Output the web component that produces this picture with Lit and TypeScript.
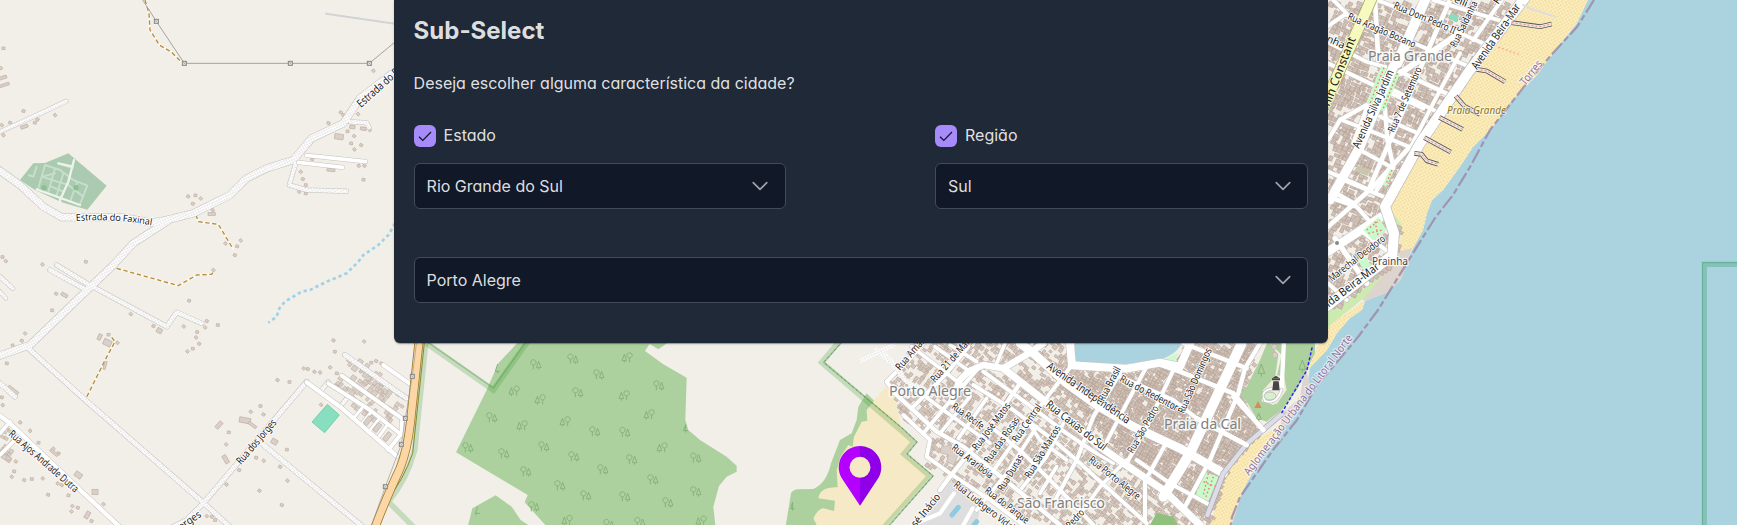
import { LitElement, html, svg, css } from "lit";
import { customElement, property } from "lit/decorators.js";

type Pt = [number, number];
const pts = (s: string): Pt[] => s.trim().split(/\s+/).map((p) => p.split(",").map(Number) as Pt);

function inside(x: number, y: number, poly: Pt[]): boolean {
  let hit = false;
  for (let i = 0, j = poly.length - 1; i < poly.length; j = i++) {
    const [xi, yi] = poly[i], [xj, yj] = poly[j];
    if (yi > y !== yj > y && x < ((xj - xi) * (y - yi)) / (yj - yi) + xi) hit = !hit;
  }
  return hit;
}

// Fills a district outline with small footprints aligned to its street grid.
function footprints(outline: string, deg: number, cell: number, density: number, seed: number): string {
  const poly = pts(outline);
  let s = seed;
  const rnd = () => ((s = (s * 16807) % 2147483647) / 2147483647);
  const c = Math.cos((deg * Math.PI) / 180), n = Math.sin((deg * Math.PI) / 180);
  const cx = poly.reduce((a, p) => a + p[0], 0) / poly.length;
  const cy = poly.reduce((a, p) => a + p[1], 0) / poly.length;
  let d = "";
  for (let u = -800; u < 800; u += cell)
    for (let v = -800; v < 800; v += cell) {
      const uu = u + (rnd() - 0.5) * cell * 0.4, vv = v + (rnd() - 0.5) * cell * 0.4;
      const x = cx + uu * c - vv * n, y = cy + uu * n + vv * c;
      const w = cell * (0.6 + rnd() * 0.65), h = cell * (0.55 + rnd() * 0.6);
      if (rnd() > density || !inside(x, y, poly)) continue;
      d += `M${x.toFixed(1)} ${y.toFixed(1)}l${(w * c).toFixed(1)} ${(w * n).toFixed(1)}l${(-h * n).toFixed(1)} ${(h * c).toFixed(1)}l${(-w * c).toFixed(1)} ${(-w * n).toFixed(1)}z`;
    }
  return d;
}

const SOUTH = "100,30 520,30 575,40 575,110 740,125 840,100 905,110 905,30 1100,30 1150,40 1100,150 1085,200 1140,300 1040,420 990,585 560,585 440,560 330,500 210,450 130,390 150,330 60,260 20,160";
const SOUTH_DENSE = "470,60 575,130 740,125 850,110 920,60 1130,40 1080,190 1140,300 1050,410 980,580 800,440 700,340 560,190";
const NORTH = "54,0 640,0 480,210 330,420 240,600 230,620 270,690 260,780 60,930 54,900";

const southRoads: [number, string][] = [
  [11, "95,50 200,130 245,165"], [11, "165,50 270,125"], [11, "210,45 290,95"], [11, "90,165 190,240 330,340"],
  [13, "45,190 170,305 250,350 400,470 540,585"], [12, "70,255 150,330 140,380 210,430 330,510 430,585"],
  [12, "280,165 400,240 520,330 600,400 700,490 800,580"], [12, "310,125 440,220 560,310 650,370"],
  [12, "345,300 430,370 540,480 640,585"], [11, "440,270 480,330 560,390"], [12, "20,155 95,80 130,40"],
  [12, "100,230 200,130 265,50"], [12, "130,310 230,190 290,120"], [11, "180,310 270,200"], [11, "235,325 320,205"],
  [13, "180,480 210,440 330,290 420,160"], [12, "345,415 420,310 510,190 580,100"], [11, "290,540 380,430 470,290"],
  [11, "425,475 500,380 550,280"], [12, "520,520 590,390 640,260 720,130"], [11, "480,490 530,410"],
  [11, "610,540 660,470 740,390"], [12, "680,335 740,220 800,110"], [12, "740,400 800,290 885,110"],
  [12, "795,570 795,450"], [12, "800,445 855,345"], [12, "20,155 45,190"], [11, "350,100 375,40"],
  [13, "910,40 1100,115"], [14, "830,100 900,125 1060,190 1150,300"], [13, "950,265 1100,345"],
  [13, "1140,40 1095,115 1075,190 990,390 915,530"], [12, "770,390 870,460 990,525"],
  [12, "720,140 880,210 950,265"], [11, "1215,40 1205,190"], [10, "600,340 700,400"],
  [20, "490,40 455,65 370,115 310,105 265,125 240,150 215,215"], [26, "420,40 455,65"],
  [24, "570,40 576,106 740,116 840,98 900,110 935,30"],
  [22, "370,115 490,210 660,350 760,420 850,480 960,585"],
  [26, "455,65 560,160 650,225 760,290 900,355 1030,430"],
  [30, "850,500 930,370 1010,200 1085,40"],
];

const northRoads: [number, string][] = [
  [12, "70,0 110,40 54,78"], [14, "195,0 205,180"], [12, "110,45 360,150 490,205"], [12, "200,0 360,60 520,130"],
  [12, "370,0 580,65"], [12, "60,130 170,185 220,200"], [12, "54,190 200,260 340,325"], [13, "270,215 430,290"],
  [12, "250,270 400,345"], [13, "54,420 90,360 170,315 225,325 232,420 250,500 200,570"], [12, "210,350 335,405"],
  [12, "95,360 200,400 320,450"], [12, "54,515 180,570"], [12, "150,450 250,505"], [14, "420,0 350,160 280,330 180,560"],
  [12, "450,160 380,290 300,445"], [12, "575,0 490,120"], [18, "270,220 330,180 440,105"], [13, "225,200 180,300 130,430"],
  [13, "54,590 140,620 210,700"], [14, "300,440 190,560 54,680"], [14, "70,575 130,610"],
  [26, "54,755 215,650"], [16, "75,715 170,850"], [12, "54,850 110,900"], [12, "150,690 240,760"], [12, "100,540 220,590"],
  [30, "345,0 262,190"], [28, "250,200 150,440 60,600"],
];

const dirtRoads: [number, string][] = [
  [21, "-10,505 60,555 130,620 185,652 370,652 455,668 500,660 580,640 690,585 740,535 800,505 880,480 935,415 1030,370 1080,295 1190,210"],
  [21, "500,665 400,730 340,795 90,1035 -10,1070"], [12, "0,395 100,350 198,304"],
  [12, "1050,365 1100,368 1107,382"], [12, "890,480 868,555 920,570 1040,574"], [13, "150,810 250,865"],
  [13, "170,795 260,850 500,980 530,937 605,970"], [14, "85,1045 250,1195 610,1508 700,1590"],
  [14, "920,1145 780,1310 610,1510 560,1560 480,1600"], [14, "785,1330 1100,1590"],
  [14, "1035,1065 1220,1195"], [12, "965,1170 985,1145"], [12, "1020,1220 1045,1190"], [14, "0,1150 45,1190"], [12, "0,830 38,865"], [10, "0,875 18,895"],
];
const pavedLeft: [number, string][] = [
  [11, "920,466 1097,485"], [11, "895,487 1028,502"], [13, "-10,1240 30,1270 230,1460 380,1600"], [11, "30,1265 0,1300"], [11, "40,1325 0,1365"],
  [13, "920,1147 1020,1220 1190,1368"], [12, "985,1150 1110,1230 1205,1305"], [12, "1025,1127 1215,1262"], [12, "1150,1095 1230,1152"],
  [12, "1205,1265 1205,1300 1165,1350"], [9, "1085,1225 1065,1250"], [9, "1110,1240 1088,1268"], [9, "1135,1260 1112,1288"], [9, "1160,1278 1138,1308"],
];

const houses = "10,145 2,204 70,333 165,345 112,358 104,368 5,375 30,368 10,405 1022,337 1030,345 1074,342 985,369 1042,394 1062,408 1053,430 1063,448 1083,435 1090,386 1109,390 936,477 1076,497 1093,497 1090,539 902,515 908,537 917,555 897,575 917,580 1120,212 564,589 586,586 602,595 578,611 638,630 676,730 711,739 722,721 704,765 7,771 17,783 257,785 127,793 168,881 156,931 75,1000 65,1022 38,1036 392,942 460,978 551,979 620,963 653,975 615,982 591,996 588,1012 597,1031 578,1046 562,1054 567,902 325,1004 352,1028 20,1090 640,810 832,1140 868,1146 911,1105 923,1107 960,1117 990,1102 1004,1055 1092,1024 1000,1021 1010,1120 943,1115 781,1218 752,1235 790,1243 686,1297 678,1333 717,1410 679,1453 778,1472 768,1373 791,1382 840,1400 860,1349 862,1442 845,1515 963,1214 60,1267 115,1328 160,1346 175,1360 90,1292 47,1384 42,1414 35,1430 72,1440 95,1437 128,1435 144,1484 173,1450 185,1455 205,1486 217,1518 233,1523 260,1485 310,1512 274,1563 214,1534 1128,1083 1113,1088 1143,1090 5,1192 8,1215 20,1345 15,1360 620,1548 635,1550 645,1560";
const bigHouses = "8,233,24,9,-18 12,255,32,8,-18 73,380,22,9,-20 1017,410,26,16,8 1057,381,16,10,8 1090,386,18,9,8 993,510,24,8,5 635,642,22,8,0 193,885,20,10,30 299,1011,10,18,25 322,1028,24,18,25 315,1096,7,24,15 478,992,16,14,30 657,1275,12,24,42 735,1261,34,16,10 757,1275,28,8,35 823,1325,18,15,30 677,1378,12,26,-30 235,1425,22,16,35 285,1476,18,16,0 162,1358,28,8,40 262,1545,12,22,30 38,1172,36,14,38 20,1375,28,14,35";

const trees = "318,104 429,87 507,134 444,188 186,263 495,305 585,307 114,353 222,371 342,350 432,380 519,419 288,425 390,467 468,497 585,500 606,389 669,449 714,518 798,384 798,485 312,530 687,167 630,577 537,583 591,83 252,183 330,209 582,197 657,254 276,287 405,275 696,353 411,571 813,573";

type Lab = [string, number, number, number, number, number?];
const streetLabels: Lab[] = [
  ["Estrada do Faxinal", 361, 108, 418, 57, 11], ["Rua Ajos Andrade Dutra", 8, 435, 75, 493, 10.5],
  ["Rua dos Jorges", 241, 465, 277, 423, 10.5], ["Jorges", 179, 532, 202, 516, 10.5], ["Rua Amazonas", 900, 371, 938, 327],
  ["Rua 21 de Maio", 935, 383, 973, 340], ["Rua Recife", 951, 408, 981, 430], ["Rua José Matos", 977, 451, 1011, 406],
  ["Rua das Rosas", 989, 464, 1020, 420], ["Rua Central", 1017, 443, 1042, 407], ["Rua São Marcos", 1030, 479, 1061, 428],
  ["Rua Araribóia", 951, 449, 990, 479], ["Rua Dunas", 1003, 492, 1024, 457], ["Rua Ludegero Vidal", 953, 486, 1011, 531],
  ["Rua do Parque", 984, 492, 1026, 524], ["Rua José Inácio", 898, 549, 941, 497], ["Rua São Pedro", 1049, 552, 1085, 513],
  ["Avenida Independência", 1046, 368, 1127, 424, 11.5], ["Rua Caxias do Sul", 1045, 406, 1103, 451, 11.5],
  ["Rua Porto Alegre", 1088, 461, 1137, 500], ["Rua Brasil", 1104, 402, 1121, 369], ["Rua do Redentor", 1119, 381, 1176, 411],
  ["Rua São Pedro", 1133, 454, 1159, 408], ["Rua São Domingos", 1184, 414, 1212, 350],
  ["Avenida Silva Jardim", 1359, 149, 1394, 72, 11], ["Rua 7 de Setembro", 1394, 133, 1422, 69], ["Rua Aragão Bozano", 1347, 19, 1414, 48],
  ["Rua Dom Pedro II", 1393, 8, 1454, 34], ["Rua Saldanha", 1456, 48, 1478, 3], ["Avenida Beira-Mar", 1477, 70, 1521, 7, 11.5],
  ["Benjamin Constant", 1316, 141, 1356, 39, 12], ["Saldanha", 1302, 30, 1343, 49], ["Borelli", 1438, -5, 1466, 7], ["Rua", 1498, 5, 1510, -12],
  ["Marechal Deodoro", 1332, 282, 1386, 240], ["Avenida Beira-Mar", 1310, 322, 1380, 268, 11.5],
];

const line = (w: number, d: string, cls: string) => svg`<polyline class=${cls} points=${d} stroke-width=${w}></polyline>`;
const roads = (list: [number, string][], cls: string) =>
  svg`${list.map(([w, d]) => line(w + 3, d, "casing"))}${list.map(([w, d]) => line(w, d, cls))}`;
const streetLabel = ([t, x1, y1, x2, y2, size = 10.2]: Lab, cls = "street") => {
  const len = Math.hypot(x2 - x1, y2 - y1), a = (Math.atan2(y2 - y1, x2 - x1) * 180) / Math.PI;
  return svg`<text class=${cls} font-size=${size} textLength=${len.toFixed(1)} lengthAdjust="spacingAndGlyphs"
    transform=${`translate(${x1} ${y1}) rotate(${a.toFixed(1)})`}>${t}</text>`;
};
const place = (t: string, x: number, y: number, w: number) =>
  svg`<text class="place" x=${x} y=${y} textLength=${w}>${t}</text>`;
const node = (x: number, y: number) => svg`<g transform=${`translate(${x} ${y})`}><rect class="node" x="-6" y="-6" width="12" height="12"></rect><path class="nodex" d="M-4-4L4 4M4-4L-4 4"></path></g>`;

@customElement("city-map")
class CityMap extends LitElement {
  static styles = css`
    :host { display: block; overflow: hidden; background: #f2efe9; }
    svg { display: block; }
    polyline, .line { fill: none; stroke-linejoin: round; stroke-linecap: round; }
    .casing { stroke: #c4c1bf; }
    .road { stroke: #fff; }
    .dirt { stroke: url(#dirt); }
    .bld { fill: #d9d0c9; stroke: #c3b2a6; stroke-width: 2.2; }
    .bld.town { fill: #d3c6bd; stroke: #bfada1; stroke-width: 2.6; }
    .bld.dense { fill: #cfc1b7; stroke: #b9a598; }
    .sea { fill: #aad3df; }
    .sand { fill: url(#sand); }
    .forest { fill: #add19e; }
    .trail { stroke: #b48c3a; stroke-width: 4; stroke-dasharray: 13 8; stroke-linecap: butt; }
    .trailhalo { stroke: #fbf8f2; stroke-width: 8; }
    .stream { stroke: #9fd2e6; stroke-width: 8; stroke-dasharray: 10 9; stroke-linecap: butt; }
    .power { stroke: #a5a29f; stroke-width: 3; }
    .node { fill: #f2efe9; stroke: #858585; stroke-width: 3; }
    .nodex { stroke: #858585; stroke-width: 1.5; }
    .reserve { stroke: #459b3c; stroke-opacity: 0.25; stroke-width: 17; stroke-linejoin: miter; stroke-linecap: butt; }
    .reserveline { stroke: #459b3c; stroke-opacity: 0.4; stroke-width: 4; stroke-linejoin: miter; }
    .border { stroke: #9c8aaa; stroke-width: 2.2; stroke-dasharray: 15 3 6 3; stroke-linecap: butt; stroke-opacity: 0.85; }
    text { font-family: "Noto Sans", sans-serif; paint-order: stroke; stroke-linejoin: round; }
    .street { fill: #1c1c1c; stroke: #fff; stroke-width: 2px; }
    .onyellow { fill: #222; stroke: #f7fabf; stroke-width: 2px; }
    .place { font-size: 14.3px; fill: #818181; stroke: #fffc; stroke-width: 3px; }
    .hamlet { font-size: 10.2px; fill: #444; stroke: #fffc; stroke-width: 2.5px; }
    .beach { font-size: 10px; font-style: italic; fill: #8c7622; stroke: #fff8; stroke-width: 2px; }
    .admin { fill: #93709f; stroke: #fff9; stroke-width: 2.4px; }
    .tree { fill: none; stroke: #83b077; stroke-width: 2.8; }
    .pier { stroke: #555; stroke-linecap: butt; stroke-width: 14; }
    .pierin { stroke: #eee5df; stroke-linecap: butt; stroke-width: 9; }
    .pierdash { stroke: #ef8a80; stroke-width: 3; stroke-dasharray: 6 6; stroke-linecap: butt; }
    .garden { fill: #c8facc; }
    .paths { stroke: #f5796c; stroke-width: 4; stroke-dasharray: 5 7; stroke-linecap: butt; }
  `;

  private left() {
    const bh = bigHouses.split(" ").map((b) => b.split(",").map(Number));
    const trails = ["435,0 447,40 450,90 478,135 515,157 545,187", "588,645 595,665 655,673 698,745",
      "350,805 450,833 535,857 590,825 635,823 642,812", "335,1012 345,1025 318,1075 258,1195"];
    return svg`<g transform="scale(.33333)">
      <path fill="#aacbaf" d="M60 540L100 490L135 489L205 460L320 557L262 629L185 607L105 570Z"></path>
      <path class="line" stroke="#dce9dd" stroke-width="6" stroke-dasharray="9 3" stroke-opacity=".6" d="M175 490L220 505M110 500L100 530L85 525M135 495L115 565M165 505L145 575M190 520L170 585M135 495L180 510L220 540L262 557M125 530L205 555L250 590M125 530L165 520M262 557L240 612M232 545L210 605M155 560L190 575"></path>
      <path class="line" stroke="#eef2ec" stroke-width="7" d="M222 480L205 545L180 600L182 635M110 568L240 615M175 490L218 500"></path>
      <circle cx="132" cy="563" r="8" fill="#8dbf94"></circle><circle cx="228" cy="563" r="8" fill="#8dbf94"></circle>
      ${trails.map((t) => svg`<polyline class="trailhalo" points=${t}></polyline><polyline class="trail" points=${t}></polyline>`)}
      <polyline class="stream" points="1185,670 1165,705 1135,735 1090,765 1075,785 1040,820 980,845 930,870 905,875 855,905 838,925 830,950 805,968"></polyline>
      <path class="line" stroke="#d2d3d5" stroke-width="6" d="M978 41L1190 72"></path>
      <polyline class="power" points="425,-5 469,64 553,190 1108,190 1190,122"></polyline>
      ${[[469, 64], [553, 190], [871, 190], [1108, 190]].map(([x, y]) => node(x, y))}
      ${houses.split(" ").map((h, i) => { const [x, y] = h.split(","); return svg`<rect class="bld" x="-4" y="-4" width="9" height="8" transform=${`translate(${x} ${y}) rotate(${(i * 37) % 60})`}></rect>`; })}
      ${bh.map(([x, y, w, h, r]) => svg`<rect class="bld" x=${-w / 2} y=${-h / 2} width=${w} height=${h} transform=${`translate(${x} ${y}) rotate(${r})`}></rect>`)}
      <path class="bld" d=${footprints("1030,1050 1130,1100 1215,1190 1200,1225 1180,1270 1100,1250 1000,1150 985,1130 1060,1110", 36, 13, 0.62, 77)}></path>
      <path class="bld" d=${footprints("0,1290 20,1270 40,1320 25,1370 0,1340", 30, 12, 0.7, 5)}></path>
      ${roads(dirtRoads, "dirt")}${roads(pavedLeft, "road")}
      <g class="bld"><rect x="-8" y="-13" width="14" height="28" transform="translate(1105 1262) rotate(38)"></rect><rect x="-8" y="-13" width="14" height="28" transform="translate(1133 1282) rotate(38)"></rect><rect x="-8" y="-13" width="14" height="28" transform="translate(1163 1310) rotate(38)"></rect></g>
      <path fill="#88dfbf" stroke="#6fc9a6" stroke-width="2.5" d="M982 1213L1018 1245L974 1298L936 1266Z"></path>
    </g>`;
  }

  private highway() {
    const d = "M1258 1015L1231 1270Q1222 1350 1200 1405Q1160 1490 1118 1600";
    return svg`<g transform="scale(.33333)">
      <path class="line reserve" d="M1278 1020L1244 1350Q1220 1440 1165 1505L1240 1580"></path>
      <path class="line" stroke="#7f8f2c" stroke-width="3" d="M1274 1020L1238 1360Q1210 1440 1162 1500"></path>
      <path class="line" stroke="#a07c2c" stroke-width="27" d=${d}></path>
      <path class="line" stroke="#fcd6a4" stroke-width="22" d=${d}></path>
      <path class="line" stroke="#999" stroke-width="2" d="M1251 1015L1237 1129L1216 1255L1204 1333L1156 1460L1110 1590"></path>
      ${[[1237, 1129], [1216, 1255], [1204, 1333], [1156, 1460]].map(([x, y]) => node(x, y))}
    </g>`;
  }

  private forest() {
    const t = pts(trees);
    return svg`<g transform="translate(430 330) scale(.33333)">
      <path class="forest" d="M275 25L205 100L170 180L78 367L293 495L284 517L355 595H857L850 530L867 468L890 440L920 425V407L890 380L810 330L775 300L766 270L770 143L700 103L645 63L670 25ZM655 40L685 58L725 30ZM112 595L127 535L197 496L245 530L272 570L310 595Z"></path>
      <path class="forest" d="M1066 595L1083 490Q1090 478 1105 478L1150 477Q1190 460 1203 400L1230 330L1265 310L1280 270L1285 230L1310 190L1345 225L1320 300L1250 400L1230 595Z"></path>
      <path fill="#f5e9c6" d="M1310 240L1365 172L1395 185L1402 235L1412 290L1455 335L1425 372L1503 437L1360 595H1165L1150 565Q1165 535 1180 535L1212 543L1215 512L1165 505Q1170 470 1223 472L1220 420L1232 380L1255 345L1268 350L1272 320L1295 275L1312 272Z"></path>
      ${t.map(([x, y], i) => svg`<path class="tree" transform=${`translate(${x} ${y})${i > 24 ? " scale(-1 1)" : ""}`} d="M-8 14V1A8 8 0 1 1-7.500 1M8 15V9M8-10L1 9H15Z"></path>`)}
      <path class="tree" d="M203 130V124M203 102L196 124H210M138 556V548M143 530L136 550H150M1088 542V516L1082 536H1094M767 308V284L760 302H774"></path>
      <path class="line reserve" d="M-10 40L190 180L300 25"></path><path class="line reserveline" d="M-8 36L190 174L292 30"></path>
      <path class="line reserve" d="M1230 32L1175 97L1412 300L1452 336L1422 372L1500 438L1355 600"></path>
      <path class="line reserveline" d="M1236 36L1181 97L1416 294L1461 336L1431 372L1509 438L1366 600"></path>
      <path class="line" stroke="#6a8a66" stroke-width="3" stroke-dasharray="3 12" d="M1236 36L1181 97L1416 294L1461 336L1431 372L1509 438L1366 600"></path>
    </g>`;
  }

  private city() {
    const piers = ["605,68 690,80 725,72", "500,208 530,213 585,245", "437,288 465,320 510,343", "388,352 458,388", "343,413 422,456", "313,460 335,463 350,482 384,493"];
    return svg`
      <g transform="translate(880 330) scale(.33333)">
        <path fill="#dedede" d="M215 450L300 530L290 600L90 600L165 500Z"></path>
        <path class="bld town" d=${footprints(SOUTH, 38, 11.5, 0.55, 4242)}></path>
        <path class="bld dense" d=${footprints(SOUTH_DENSE, 30, 11, 0.85, 99)}></path>
        <path class="bld" d="M185 350L215 345L210 360L235 372L222 405L200 395L205 375L180 368Z"></path>
        <path class="sea" d="M585 30H905Q905 65 840 90L735 102L595 97Q585 95 585 80Z"></path>
        <path class="garden" d="M845 92L895 68L880 103Z"></path>
        <path class="garden" d="M975 425L1015 440L985 515L945 500Z"></path><path class="line paths" d="M985 430L970 495M1000 440L978 500M970 455L1005 470"></path>
        <path fill="#8fc07c" d="M810 585L830 548L880 560L900 600H800Z"></path>
        ${roads(southRoads, "road")}
        <path class="line" stroke="#fff" stroke-width="12" d="M222 490L180 550L120 575M278 535L250 585"></path>
        <path class="line" stroke="#8fcbe0" stroke-width="15" d="M216 555L235 532M282 585L290 575"></path>
        <path class="line dirt" stroke-width="14" d="M-55 92L40 45M20 75L75 150L120 180M-10 60L60 120"></path>
      </g>
      <g transform="translate(1130 330) scale(.33333)">
        <path class="forest" d="M415 30L390 90L350 170L330 195L350 215L380 265L410 275L455 240L500 180L555 70V30Z"></path>
        <path fill="#f2efe9" d="M420 40L455 75L440 140L460 150L462 190L430 225L395 210L400 180L435 145L445 75Z"></path>
        <path fill="#f0e9e0" d="M440 135L462 140L470 180L440 222L395 215L400 180Z"></path>
        <path class="line" stroke="#fff" stroke-width="13" d="M462 30L455 175"></path>
        <path class="line" stroke="#b5b3b0" stroke-width="9" d="M455 178Q440 225 405 213Q390 182 425 176"></path>
        <path class="line" stroke="#fff" stroke-width="6" d="M455 178Q440 225 405 213Q390 182 425 176"></path>
        <ellipse cx="420" cy="198" rx="18" ry="12" fill="#d5efcf" stroke="#aaa" stroke-width="2"></ellipse>
        <circle class="bld" cx="433" cy="50" r="8"></circle><circle class="bld" cx="435" cy="75" r="8"></circle>
        <path d="M430 154H446L449 181H427ZM426 145H450V151H426ZM438 137L448 144H428Z" fill="#444"></path>
        <path d="M384 213L395 234H373Z" fill="#d08f55"></path>
        <path class="tree" d="M394 140V130M394 102L384 130H404ZM517 128V118M517 90L507 118H527ZM386 275V268M386 250L378 268H394Z"></path>
        <path class="line" stroke="#aaa8b4" stroke-width="17" d="M455 252L350 342L280 430L232 555"></path><path class="line" stroke="#dddde8" stroke-width="13" d="M455 252L350 342L280 430L232 555"></path>
        <path class="line" stroke="#fff" stroke-width="14" d="M310 200L400 300M200 265L350 345"></path>
      </g>
      <g transform="translate(1310 0) scale(.33333)">
        <path class="bld dense" d=${footprints(NORTH, 24, 13.5, 0.83, 1234)}></path>
        <path fill="#c8c6ad" d="M143 497L182 510L172 528L133 512Z"></path><path fill="#88dfbf" d="M422 40L446 50L440 66L418 57Z"></path>
        ${roads(northRoads, "road")}
        <path class="garden" d="M213 198L230 205L185 318L170 310ZM258 215L270 222L222 335L210 328ZM240 508L252 512L228 560L218 555Z"></path>
        <path class="line paths" d="M222 203L180 310M262 220L218 330M246 510L228 552"></path>
        <path class="line" stroke="#a9ab72" stroke-width="36" d="M187-10L152 70L45 310"></path><path class="line" stroke="#f7fabf" stroke-width="31" d="M187-10L152 70L45 310"></path>
        <path class="line" stroke="#bbb" stroke-width="34" d="M655-20L480 210L330 430L225 620L252 700L247 765L30 935"></path>
        <path class="line" stroke="#fff" stroke-width="30" d="M655-20L480 210L330 430L225 620L252 700L247 765L30 935"></path>
        <path class="garden" d="M160 690L205 652L230 690L190 722Z"></path><path class="line paths" d="M170 690L210 660M175 700L218 690M195 665L205 710"></path>
        <path class="garden" d="M143 780L158 768L184 794L163 814Z"></path>
        <circle cx="81" cy="729" r="6" fill="#8a8a82"></circle>
        <path class="line" stroke="#ddd" stroke-width="6" d="M640 15L665 27L735 50"></path>
        ${piers.map((p) => svg`<polyline class="pier" points=${p}></polyline><polyline class="pierin" points=${p}></polyline><polyline class="pierdash" points=${p}></polyline>`)}
        <path class="line paths" stroke-opacity=".6" d="M565 142L632 165"></path>
      </g>`;
  }

  render() {
    return html`<svg width="1737" height="525" viewBox="0 0 1737 525">
      <defs>
        <pattern id="dirt" width="11" height="11" patternUnits="userSpaceOnUse" patternTransform="rotate(20)"><rect width="11" height="11" fill="#fff"></rect><circle cx="2.7" cy="2.7" r="1.600" fill="#aaa6a3"></circle><circle cx="8.2" cy="8.2" r="1.600" fill="#aaa6a3"></circle></pattern>
        <pattern id="sand" width="4" height="4" patternUnits="userSpaceOnUse" patternTransform="rotate(15)"><rect width="4" height="4" fill="#fdeebb"></rect><circle cx="1" cy="1" r=".65" fill="#dfc480"></circle><circle cx="3" cy="3" r=".65" fill="#e6cf92"></circle></pattern>
      </defs>
      ${this.left()}${this.highway()}${this.forest()}
      <path class="sea" d="M1588 0L1577 23L1558 47L1537 75L1510 103L1493 127L1473 147L1459 168L1443 190L1432 200L1427 213L1423 230L1412 250L1400 280L1388 292L1365 301L1362 310L1350 318L1337 333L1327 350L1310 367L1307 390L1273 440L1263 453L1243 490L1233 510L1230 525H1737V0Z"></path>
      <path class="sand" d="M1524 -5L1473 72L1440 117L1410 167L1388 205L1402 227L1398 255L1412 250L1423 230L1427 213L1432 200L1443 190L1459 168L1473 147L1493 127L1510 103L1537 75L1558 47L1577 23L1590 -5Z"></path>
      <path class="sand" d="M1365 300L1325 328L1308 370L1327 350L1337 333L1350 318L1362 310ZM1307 385L1280 425L1248 445L1225 472L1209 530H1230L1243 490L1263 453L1280 435Z"></path>
      <path fill="#ddd4cd" d="M1398 252L1412 248L1401 280L1388 292L1365 301L1357 296L1385 270ZM1305 365L1300 398L1280 415L1282 432L1297 410L1310 385Z"></path>
      <path fill="#cdebb0" d="M1388 208L1401 223L1402 232L1399 240L1392 225ZM1384 275L1364 298L1328 327V312Z"></path>
      ${this.city()}
      <path class="line" stroke="#2a2af0" stroke-width="1.5" stroke-dasharray="2 3" d="M1312 348L1307 370L1297 387L1281 414"></path>
      <path class="line border" d="M1594 0L1577 27L1553 53L1523 88L1490 130L1470 167L1453 195L1435 218L1410 258L1378 310L1358 337L1332 368L1317 385L1297 420L1273 450L1240 497L1232 517L1230 530"></path>
      <path fill="none" stroke="#45a074" stroke-opacity=".35" stroke-width="5" d="M1737 264.500H1704.500V525"></path>
      <path fill="none" stroke="#45a074" stroke-opacity=".45" stroke-width="1.300" d="M1737 262.500H1702.500V525"></path>
      <path id="faxinal" fill="none" d="M76 221Q115 218 155 226"></path>
      <text class="street" font-size="9.400"><textPath href="#faxinal" textLength="76">Estrada do Faxinal</textPath></text>
      ${streetLabels.map((l) => streetLabel(l, l[0] === "Benjamin Constant" ? "onyellow" : "street"))}
      ${streetLabel(["Aglomeração Urbana do Litoral Norte", 1249, 476, 1353, 338, 11], "admin")}
      ${streetLabel(["Torres", 1525, 86, 1543, 64, 11], "admin")}
      ${place("Porto Alegre", 889, 396, 82)}${place("São Francisco", 1017, 508, 88)}${place("Praia da Cal", 1164, 429, 77)}${place("Praia Grande", 1368, 61, 84)}
      <text class="hamlet" x="1372" y="265" textLength="36">Prainha</text>
      <text class="beach" x="1447" y="114" textLength="59">Praia Grande</text>
      <g transform="translate(860 467.300)">
        <path fill="#b400ff" d="M0-21.300A21.300 21.300 0 0 0-18.500 10.500L0 38.500V10.500A10.500 10.500 0 0 1 0-10.500Z"></path>
        <path fill="#8f00e8" d="M0-21.300A21.300 21.300 0 0 1 18.500 10.500L0 38.500V10.500A10.500 10.500 0 0 0 0-10.500Z"></path>
      </g>
    </svg>`;
  }
}

@customElement("select-box")
class SelectBox extends LitElement {
  @property() value = "";
  static styles = css`
    :host { display: flex; align-items: center; justify-content: space-between; box-sizing: border-box; height: 46px;
      padding: 0 16.500px 0 12px; background: #111827; border: 1px solid #424b57; border-radius: 6px; }
    svg { display: block; }
  `;
  render() {
    return html`<span>${this.value}</span><svg width="16" height="16" viewBox="0 0 14 14"><path d="M1.100 4.100L7 10L12.900 4.100" fill="none" stroke="#a0a4aa" stroke-width="1.500" stroke-linecap="round" stroke-linejoin="round"></path></svg>`;
  }
}

@customElement("check-option")
class CheckOption extends LitElement {
  @property() label = "";
  static styles = css`
    :host { display: flex; align-items: center; gap: 8px; height: 22px; }
    .box { display: grid; place-items: center; width: 22px; height: 22px; border-radius: 6px; background: #a78bfa; }
    .label { line-height: 20px; padding-bottom: 2px; }
  `;
  render() {
    return html`<span class="box"><svg width="14" height="14" viewBox="0 0 14 14"><path d="M1 7.700L4.800 11.400L13 3" fill="none" stroke="#111827" stroke-width="1.250"></path></svg></span><span class="label">${this.label}</span>`;
  }
}

@customElement("app-root")
class AppRoot extends LitElement {
  static styles = css`
    :host { display: grid; grid-template: 525px / 1737px; overflow: hidden; color: rgba(255, 255, 255, 0.87);
      font: 16px/1.5 Inter, sans-serif; font-feature-settings: "cv02", "cv03", "cv04", "cv11"; }
    city-map, .stage { grid-area: 1 / 1; min-width: 0; }
    .stage { display: flex; justify-content: center; align-items: flex-start; padding-right: 15px; z-index: 1; }
    .panel { box-sizing: border-box; width: 934px; height: 343px; padding: 13px 20px 0 19.6px; background: #1f2937; border-radius: 0 0 6px 6px;
      box-shadow: 0 2px 1px -1px rgba(0, 0, 0, 0.2), 0 1px 1px rgba(0, 0, 0, 0.14), 0 1px 3px rgba(0, 0, 0, 0.12); }
    .title { margin: 0; font-size: 24px; line-height: 36px; font-weight: 700; }
    .question { margin: 22px 0 30px; line-height: 24px; }
    .row { display: grid; grid-template-columns: 372.2px 373px; justify-content: space-between; margin-bottom: 48px; }
    .col { display: flex; flex-direction: column; gap: 16px; }
  `;
  render() {
    return html`<city-map></city-map>
      <div class="stage"><div class="panel">
        <h2 class="title">Sub-Select</h2>
        <p class="question">Deseja escolher alguma característica da cidade?</p>
        <div class="row">
          <div class="col"><check-option label="Estado"></check-option><select-box value="Rio Grande do Sul"></select-box></div>
          <div class="col"><check-option label="Região"></check-option><select-box value="Sul"></select-box></div>
        </div>
        <select-box value="Porto Alegre"></select-box>
      </div></div>`;
  }
}
